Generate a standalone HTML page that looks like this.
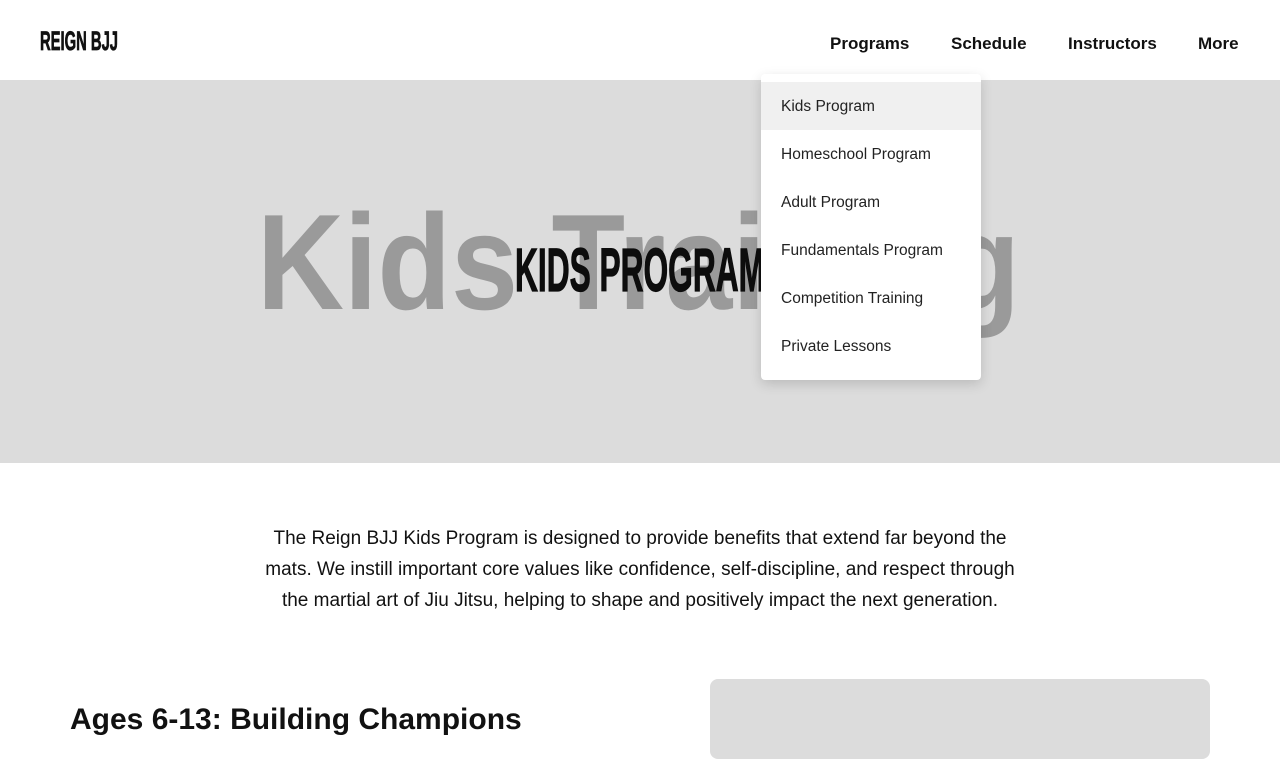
<!DOCTYPE html>
<html><head><meta charset="utf-8"><style>
*{margin:0;padding:0;box-sizing:border-box}
body{width:1280px;height:720px;overflow:hidden;background:#fff;font-family:"Liberation Sans",sans-serif;position:relative}
.hdr{position:absolute;left:0;top:0;width:1280px;height:80px;background:#fff}
.nav{position:absolute;top:34px;font-size:17px;font-weight:bold;color:#111}
.hero{position:absolute;left:0;top:80px;width:1280px;height:383px;background:#dcdcdc}
.dd{position:absolute;left:761px;top:74px;width:220px;height:306px;background:#fff;border-radius:4px;box-shadow:0 4px 12px rgba(0,0,0,.15)}
.dd div{height:48px;line-height:50px;padding-left:20px;font-size:15.5px;color:#222}
.dd div.a{background:#f0f0f0}
p.intro{position:absolute;left:250px;top:523px;width:780px;text-align:center;font-size:19px;line-height:31px;color:#111}
h2{position:absolute;left:70px;top:703px;font-size:30px;font-weight:bold;color:#111}
.box{position:absolute;left:710px;top:679px;width:500px;height:80px;background:#dcdcdc;border-radius:8px}
</style></head><body>
<div class="hero">
<svg width="1280" height="383" style="position:absolute;left:0;top:0">
<text x="257" y="229" font-family="Liberation Sans" font-weight="bold" font-size="136" fill="#9a9a9a" textLength="763" lengthAdjust="spacingAndGlyphs">Kids Training</text>
<text x="515" y="211" font-family="Liberation Sans Narrow, Liberation Sans" font-weight="bold" font-size="61" fill="#0d0d0d" stroke="#0d0d0d" stroke-width="1.2" textLength="250" lengthAdjust="spacingAndGlyphs">KIDS PROGRAM</text>
</svg>
</div>
<div class="hdr">
<svg width="100" height="40" style="position:absolute;left:40px;top:22px"><text x="0" y="28" font-family="Liberation Sans Narrow, Liberation Sans" font-weight="bold" font-size="27" fill="#111" stroke="#111" stroke-width="0.8" textLength="78" lengthAdjust="spacingAndGlyphs">REIGN BJJ</text></svg>
<span class="nav" style="left:830px">Programs</span>
<span class="nav" style="left:951px">Schedule</span>
<span class="nav" style="left:1068px">Instructors</span>
<span class="nav" style="left:1198px">More</span>
</div>
<div class="dd" style="padding-top:8px">
<div class="a">Kids Program</div><div>Homeschool Program</div><div>Adult Program</div><div>Fundamentals Program</div><div>Competition Training</div><div>Private Lessons</div>
</div>
<p class="intro">The Reign BJJ Kids Program is designed to provide benefits that extend far beyond the mats. We instill important core values like confidence, self-discipline, and respect through the martial art of Jiu Jitsu, helping to shape and positively impact the next generation.</p>
<h2>Ages 6-13: Building Champions</h2>
<div class="box"></div>
</body></html>
